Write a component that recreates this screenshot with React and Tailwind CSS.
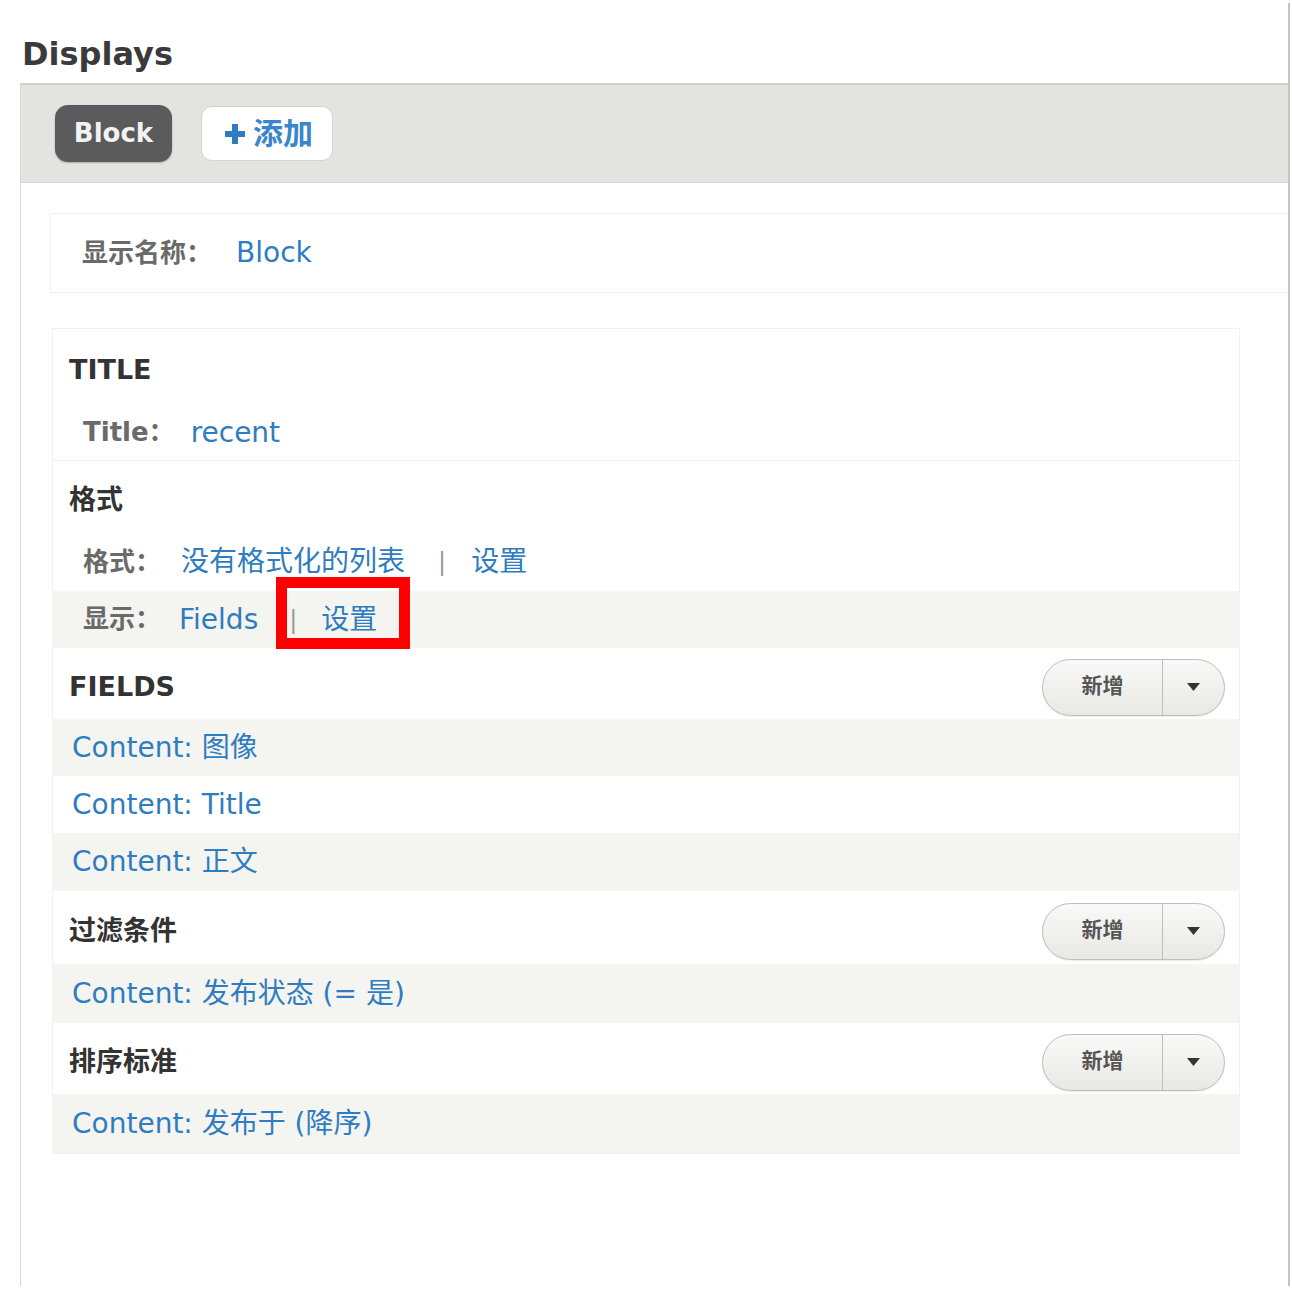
import React from "react";

const FONT = { fontFamily: '"DejaVu Sans", "Noto Sans CJK SC", sans-serif' };

function SplitButton() {
  return (
    <div className="flex h-[57px] w-[183px] items-stretch rounded-full border-[1.5px] border-[#bdbdbb] bg-gradient-to-b from-[#f9f9f7] to-[#e8e8e5] shadow-[0_1px_1px_rgba(0,0,0,0.08)]">
      <button className="flex w-[120px] items-center justify-center border-r border-[#bdbdbb] text-[21px] font-bold text-[#555]">
        新增
      </button>
      <button className="flex flex-1 items-center justify-center">
        <svg width="13" height="8" viewBox="0 0 13 8">
          <path d="M0 0 L13 0 L6.5 8 Z" fill="#333" />
        </svg>
      </button>
    </div>
  );
}

function SectionHeader({ title, height, withButton }) {
  return (
    <div className={`flex ${height} items-center justify-between pl-[16px] pr-[14px] pt-[7px] bg-white`}>
      <h3 className="text-[27px] font-bold text-[#333]">{title}</h3>
      {withButton && <SplitButton />}
    </div>
  );
}

function LinkRow({ text, gray, height = "h-[57px]" }) {
  return (
    <div className={`flex ${height} items-center pl-[19px] ${gray ? "bg-[#f4f4f0]" : "bg-white"}`}>
      <a className="text-[28px] text-[#2f7cc0]">{text}</a>
    </div>
  );
}

function Sep({ ml = "ml-[33px]", mr = "mr-[25px]" }) {
  return <span className={`${ml} ${mr} text-[24px] text-[#999]`}>|</span>;
}

export default function App() {
  return (
    <div className="w-[1292px] h-[1289px] bg-white overflow-hidden" style={FONT}>
      <div className="mt-[3px] flex h-[1283px] w-[1290px] flex-col border-r-2 border-[#c4c4c4]">
        {/* heading */}
        <div className="h-[80px] pl-[22px] pt-[31px]">
          <h2 className="text-[32px] leading-[40px] font-bold text-[#3a3a3a]">Displays</h2>
        </div>

        {/* panel */}
        <div className="ml-[20px] flex-1 border-l border-[#d8d8d8]">
          {/* tabs bar */}
          <div className="flex h-[100px] items-center gap-[29px] border-t-2 border-b border-t-[#cfcfcb] border-b-[#d6d6d2] bg-[#e3e3df] pl-[34px]">
            <button className="flex h-[57px] w-[117px] items-center justify-center rounded-[13px] bg-[#5b5b5b] text-[26px] font-bold text-[#f2f2f2] shadow-[0_1px_2px_rgba(0,0,0,0.25)]">
              Block
            </button>
            <button className="flex h-[55px] w-[132px] items-center justify-center gap-[8px] rounded-[11px] border border-[#d4d4d0] bg-white pl-[4px] text-[30px] font-bold text-[#3a86cc]">
              <svg width="20" height="20" viewBox="0 0 20 20">
                <path d="M7 0 H13 V7 H20 V13 H13 V20 H7 V13 H0 V7 H7 Z" fill="#2f7cc0" />
              </svg>
              <span>添加</span>
            </button>
          </div>

          {/* display name */}
          <div className="pt-[30px]">
            <div className="ml-[29px] flex h-[80px] items-center border border-r-0 border-[#f0f0ee] pl-[31px]">
              <span className="text-[26px] font-bold text-[#6a6a6a]">显示名称：</span>
              <a className="ml-[24px] text-[28px] text-[#2f7cc0]">Block</a>
            </div>
          </div>

          {/* settings box */}
          <div className="ml-[31px] mt-[35px] w-[1188px] border border-[#f1f1ef]">
            {/* TITLE */}
            <div className="flex h-[80px] items-center pl-[16px] pt-[2px]">
              <h3 className="text-[27px] font-bold text-[#333]">TITLE</h3>
            </div>
            <div className="flex h-[52px] items-center border-b border-[#f0f0ee] pl-[30px] pb-[4px]">
              <span className="text-[26px] font-bold text-[#6a6a6a]">Title：</span>
              <a className="ml-[16px] text-[28px] text-[#2f7cc0]">recent</a>
            </div>

            {/* 格式 */}
            <div className="flex h-[72px] items-center pl-[16px] pt-[7px]">
              <h3 className="text-[27px] font-bold text-[#333]">格式</h3>
            </div>
            <div className="flex h-[58px] items-center pl-[30px]">
              <span className="text-[26px] font-bold text-[#6a6a6a]">格式：</span>
              <a className="ml-[20px] text-[28px] text-[#2f7cc0]">没有格式化的列表</a>
              <Sep />
              <a className="text-[28px] text-[#2f7cc0]">设置</a>
            </div>
            <div className="flex h-[57px] items-center bg-[#f4f4f0] pl-[30px]">
              <span className="text-[26px] font-bold text-[#6a6a6a]">显示：</span>
              <a className="ml-[18px] text-[28px] text-[#2f7cc0]">Fields</a>
              <Sep ml="ml-[31px]" mr="mr-[24px]" />
              <span className="relative">
                <a className="text-[28px] text-[#2f7cc0]">设置</a>
                <span className="absolute left-[-45px] top-[-22px] h-[72px] w-[134px] border-[11px] border-[#ff0000]"></span>
              </span>
            </div>

            {/* FIELDS */}
            <SectionHeader title="FIELDS" height="h-[71px]" withButton />
            <LinkRow text="Content: 图像" gray />
            <LinkRow text="Content: Title" />
            <LinkRow text="Content: 正文" gray height="h-[58px]" />

            {/* 过滤条件 */}
            <SectionHeader title="过滤条件" height="h-[73px]" withButton />
            <LinkRow text="Content: 发布状态 (= 是)" gray height="h-[59px]" />

            {/* 排序标准 */}
            <SectionHeader title="排序标准" height="h-[71px]" withButton />
            <LinkRow text="Content: 发布于 (降序)" gray height="h-[59px]" />
          </div>
        </div>
      </div>
    </div>
  );
}
